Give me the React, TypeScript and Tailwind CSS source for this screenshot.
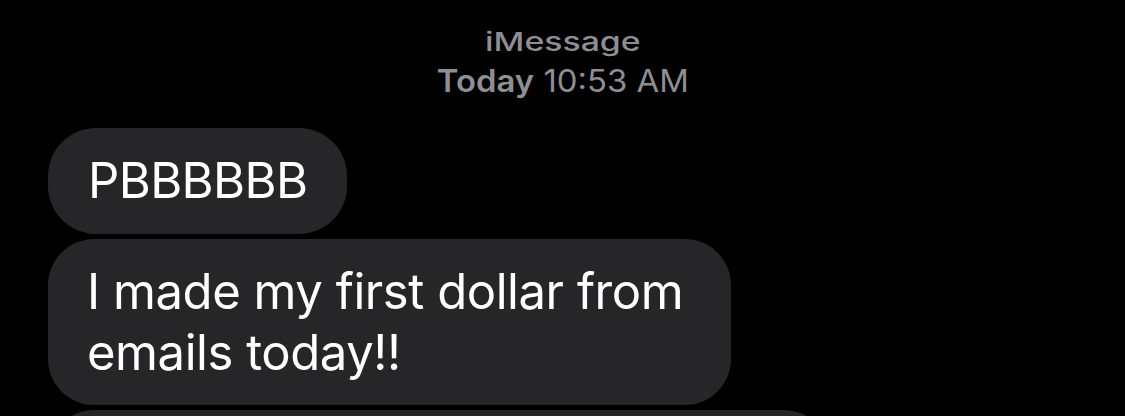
export default function App() {
  const font = { fontFamily: 'Inter, "Noto Sans", sans-serif' };
  return (
    <div className="w-[1125px] h-[416px] overflow-hidden bg-black" style={font}>
      <div className="flex flex-col items-center pt-[26px] text-[#8e8e93]">
        <div className="text-[26px] leading-[32px] font-medium scale-x-[1.3]">iMessage</div>
        <div className="text-[31px] leading-[38px] mt-[4px] scale-x-[1.06]">
          <span className="font-semibold">Today</span> 10:53 AM
        </div>
      </div>
      <div className="flex flex-col items-start gap-[5px] pl-[48px] mt-[28px]">
        <div className="rounded-[48px] bg-[#262629] px-[40px] py-[22px] text-[49px] leading-[62px] text-white tracking-[-0.6px]">
          PBBBBBB
        </div>
        <div className="rounded-[46px] bg-[#262629] pl-[39px] pr-[48px] py-[22px] text-[49px] leading-[61px] text-white tracking-[-0.45px]">
          I made my first dollar from
          <br />
          emails today!!
        </div>
        <div className="rounded-[46px] bg-[#262629] w-[782px] h-[106px]" />
      </div>
    </div>
  );
}
